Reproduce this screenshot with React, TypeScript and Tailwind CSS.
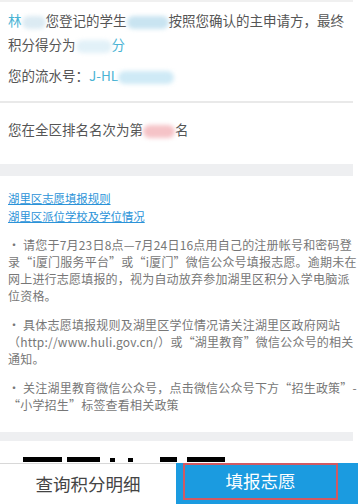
const font = { fontFamily: '"Noto Sans CJK SC", "Noto Sans", sans-serif' };

function Blob({ w, color }: { w: string; color: string }) {
  return <span className={`inline-block h-[13px] align-middle rounded-full blur-[2px] ${w} ${color}`} />;
}

export default function App() {
  return (
    <div className="w-[358px] h-[504px] bg-white overflow-hidden flex flex-col" style={font}>
      {/* score summary */}
      <div className="w-[353px] border-t-2 border-[#f0f0f0] px-2 pt-[6px] pb-[14px] text-[13.5px] text-[#555] leading-[24px]">
        <p>
          <span className="text-[#4ab3d4]">林</span>
          <Blob w="w-[24px]" color="bg-[#dcebf3]" />
          您登记的学生
          <Blob w="w-[42px]" color="bg-[#c9e4f1]" />
          按照您确认的主申请方，最终积分得分为
          <Blob w="w-[36px]" color="bg-[#e2f1f8]" />
          <span className="text-[#4ab3d4]">分</span>
        </p>
        <p className="mt-[7px]">
          您的流水号：<span className="text-[#4ab3d4]">J-HL</span>
          <Blob w="w-[56px]" color="bg-[#cfeaf6]" />
        </p>
      </div>
      <div className="w-[353px] h-[2px] bg-[#e9e9e9]" />
      <div className="w-[353px] px-2 pt-[14px] h-[61px] text-[13.5px] text-[#555] leading-[24px]">
        您在全区排名名次为第
        <Blob w="w-[32px]" color="bg-[#f5c3c7]" />
        名
      </div>
      <div className="w-[353px] h-[12px] bg-[#eeeff1]" />

      {/* links and notes */}
      <div className="w-[353px] px-2 pt-[13px]">
        <div className="text-[11.4px] leading-[18px] text-[#2b93d8] underline">
          <p>湖里区志愿填报规则</p>
          <p>湖里区派位学校及学位情况</p>
        </div>
        <div className="mt-[11px] text-[12px] tracking-[0.2px] text-[#777] leading-[17px] space-y-[12px] whitespace-nowrap">
          <p>
            • 请您于7月23日8点—7月24日16点用自己的注册帐号和密码登
            <br />录“i厦门服务平台”或“i厦门”微信公众号填报志愿。逾期未在
            <br />网上进行志愿填报的，视为自动放弃参加湖里区积分入学电脑派
            <br />位资格。
          </p>
          <p>
            • 具体志愿填报规则及湖里区学位情况请关注湖里区政府网站
            <br />（http://www.huli.gov.cn/）或“湖里教育”微信公众号的相关
            <br />通知。
          </p>
          <p>
            • 关注湖里教育微信公众号，点击微信公众号下方“招生政策”-
            <br />“小学招生”标签查看相关政策
          </p>
        </div>
      </div>
      <div className="mt-auto w-[353px] h-[9px] bg-[#eeeff1]" />

      {/* clipped heading fragments */}
      <div className="h-[22px] flex items-end pb-[1px]">
        <div className="flex items-end h-[5px]">
          <span className="ml-[23px] w-[39px] h-[5px] bg-black" />
          <span className="ml-[5px] w-[33px] h-[5px] bg-black" />
          <span className="ml-[10px] w-[5px] h-[4px] bg-black" />
          <span className="ml-[13px] w-[5px] h-[4px] bg-black" />
          <span className="ml-[27px] w-[17px] h-[5px] bg-black" />
          <span className="ml-[10px] w-[38px] h-[5px] bg-black" />
        </div>
      </div>

      {/* bottom bar */}
      <div className="h-[41px] flex">
        <div className="w-[176px] border-t border-[#d8d8d8] flex items-center justify-center text-[17.5px] text-[#444]">
          查询积分明细
        </div>
        <div className="flex-1 bg-[#1b9be0] flex items-center pl-[7px] pr-[20px] pb-[4px]">
          <div className="w-full h-[37px] border-2 border-[#d05a63] flex items-center justify-center text-[17.5px] text-white">
            填报志愿
          </div>
        </div>
      </div>
    </div>
  );
}
